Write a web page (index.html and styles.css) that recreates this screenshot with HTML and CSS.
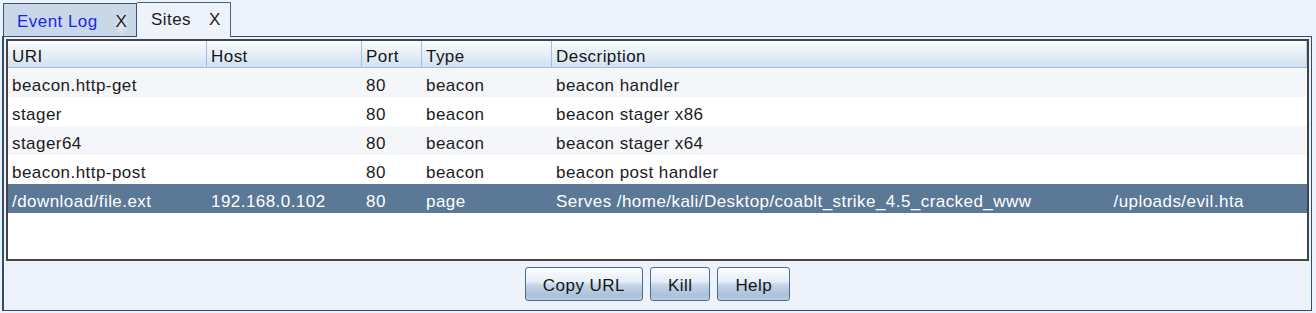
FILE: index.html
```html
<!DOCTYPE html>
<html lang="en-US">
<head>
   <meta charset="UTF-8">
   <meta name="viewport" content="width=device-width, initial-scale=1.0">
   <title>Sites</title>
   <link rel="stylesheet" href="styles.css">
</head>
<body>
   <div id="tab-strip">
      <div class="tab">
         <span class="tab-title event">Event Log</span>
         <span class="tab-close">X</span>
      </div>
      <div class="tab selected">
         <span class="tab-title">Sites</span>
         <span class="tab-close">X</span>
      </div>
   </div>

   <div id="tab-pane">
      <div id="scroll-pane">
         <div class="row header-row">
            <div class="cell">URI</div>
            <div class="cell">Host</div>
            <div class="cell">Port</div>
            <div class="cell">Type</div>
            <div class="cell">Description</div>
         </div>
         <div class="row alt">
            <div class="cell">beacon.http-get</div>
            <div class="cell"></div>
            <div class="cell">80</div>
            <div class="cell">beacon</div>
            <div class="cell">beacon handler</div>
         </div>
         <div class="row">
            <div class="cell">stager</div>
            <div class="cell"></div>
            <div class="cell">80</div>
            <div class="cell">beacon</div>
            <div class="cell">beacon stager x86</div>
         </div>
         <div class="row alt">
            <div class="cell">stager64</div>
            <div class="cell"></div>
            <div class="cell">80</div>
            <div class="cell">beacon</div>
            <div class="cell">beacon stager x64</div>
         </div>
         <div class="row">
            <div class="cell">beacon.http-post</div>
            <div class="cell"></div>
            <div class="cell">80</div>
            <div class="cell">beacon</div>
            <div class="cell">beacon post handler</div>
         </div>
         <div class="row picked">
            <div class="cell">/download/file.ext</div>
            <div class="cell">192.168.0.102</div>
            <div class="cell">80</div>
            <div class="cell">page</div>
            <div class="cell">Serves /home/kali/Desktop/coablt_strike_4.5_cracked_www<span class="path-tail">/uploads/evil.hta</span></div>
         </div>
      </div>

      <div id="button-bar">
         <button class="btn">Copy URL</button>
         <button class="btn">Kill</button>
         <button class="btn">Help</button>
      </div>
   </div>
</body>
</html>
```

FILE: styles.css
```css
:root {
   --bg-color: #eef2fa;
   --pane-border: #2f4d70;
   --grid-border: #444;
   --head-line: #a3c0dc;
   --alt-row: #f5f6f9;
   --picked-row: #5b7897;
}
* {
   box-sizing: border-box;
}
html {
   height: 100%;
}
body {
   margin: 0;
   padding: 0;
   background: var(--bg-color);
   font-family: "Liberation Sans", Arial, sans-serif;
   font-size: 17px;
   letter-spacing: 0.45px;
   line-height: 20px;
   color: #1c1c1c;
   overflow: hidden;
}

/* tabs */
#tab-strip {
   display: flex;
   align-items: flex-end;
   height: 36px;
   padding-left: 3px;
}
.tab {
   display: flex;
   height: 33px;
   padding: 8px 0 0 13px;
   background: #c9d8e7;
   border: 1px solid #34527a;
   border-bottom: none;
   width: 134px;
}
.tab.selected {
   position: relative;
   z-index: 1;
   height: 35px;
   margin-bottom: -1px;
   width: 94px;
   padding-top: 7px;
   padding-left: 14px;
   background: var(--bg-color);
   border-color: #4a6482;
   border-left: none;
}
.tab-title.event {
   color: #1f1ff0;
}
.tab-close {
   margin-left: 17px;
   padding: 0 1px;
   background: radial-gradient(rgba(255, 255, 255, 0.55), rgba(255, 255, 255, 0) 70%);
}

/* pane */
#tab-pane {
   margin-left: 2px;
   width: 1310px;
   height: 275px;
   padding: 2px 2px 0 2px;
   border: 1px solid var(--pane-border);
   border-left-width: 2px;
}
#scroll-pane {
   height: 222px;
   border: 2px solid var(--grid-border);
   background: #fff;
}
.row {
   display: grid;
   grid-template-columns: 199px 155px 60px 130px 1fr;
   height: 29px;
}
.cell {
   padding: 8px 4px 1px 4px;
   white-space: nowrap;
   overflow: hidden;
}
.header-row {
   height: 27px;
   background: linear-gradient(#fafcff, #d2e0f0);
   border-bottom: 1px solid var(--head-line);
}
.header-row .cell {
   padding-top: 6px;
   padding-bottom: 0;
   border-right: 1px solid var(--head-line);
   color: #151515;
}
.header-row .cell:last-child {
   border-right-color: #c3cfdc;
}
.alt {
   background: var(--alt-row);
}
.picked {
   background: var(--picked-row);
   color: #fff;
}
.path-tail {
   margin-left: 82px;
}

/* buttons */
#button-bar {
   display: flex;
   justify-content: center;
   gap: 7px;
   margin-top: 6px;
}
.btn {
   height: 34px;
   padding: 7px 17px 4px 17px;
   font-family: inherit;
   font-size: 17px;
   letter-spacing: 0.45px;
   line-height: 20px;
   color: #161616;
   border: 1px solid #4f6a8a;
   border-radius: 3px;
   background: linear-gradient(#fcfdfe 0%, #e7eef7 42%, #c2d4e8 54%, #abc2db 86%, #bccee2 100%);
}
```
